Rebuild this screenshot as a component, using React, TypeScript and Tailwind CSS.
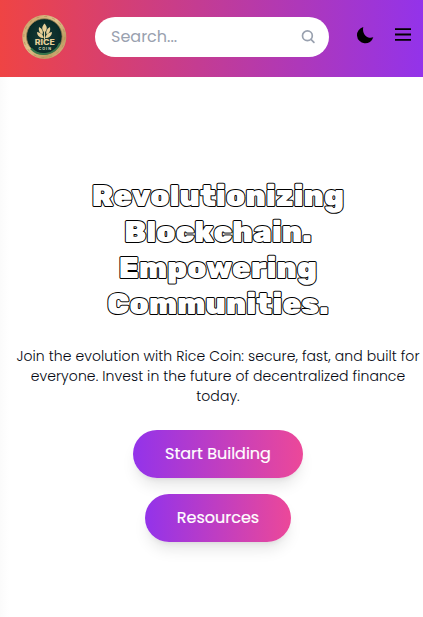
import React from "react";

const headline = ["Revolutionizing", "Blockchain.", "Empowering", "Communities."];

const intro = [
  "Join the evolution with Rice Coin: secure, fast, and built for",
  "everyone. Invest in the future of decentralized finance",
  "today.",
];

function Logo() {
  return (
    <svg viewBox="0 0 46 46" className="size-[46px] shrink-0" aria-label="Rice Coin">
      <defs>
        <linearGradient id="rim" x1="0" y1="0" x2="1" y2="1">
          <stop offset="0" stopColor="#c79c63" />
          <stop offset="0.45" stopColor="#dfc28b" />
          <stop offset="0.75" stopColor="#bd9b61" />
          <stop offset="1" stopColor="#e3c993" />
        </linearGradient>
        <radialGradient id="face">
          <stop offset="0" stopColor="#183b36" />
          <stop offset="1" stopColor="#082a27" />
        </radialGradient>
      </defs>
      <circle cx="22.300" cy="23" r="22" fill="url(#rim)" />
      <circle cx="22.300" cy="23" r="20.500" fill="none" stroke="#b18d57" strokeWidth="0.7" strokeDasharray="3 5" />
      <circle cx="22.300" cy="22.500" r="17.800" fill="url(#face)" stroke="#987f50" strokeWidth="0.800" />
      <path d="M9 34.500A17.500 17.500 0 0 0 38 29" fill="none" stroke="#36754b" strokeWidth="2" />
      <g fill="#e8cf98">
        <path d="M22.500 9.500c3 3.500 3 6 0 9-3-3-3-5.500 0-9Z" />
        <path d="M17 13c3.500 2 4.500 4.500 3.500 7.500-3-1.500-4.300-4-3.500-7.500Z" />
        <path d="M28 13c-3.500 2-4.500 4.500-3.500 7.500 3-1.500 4.300-4 3.500-7.500Z" />
        <path d="M15 18c4 .5 6 2.500 6.800 6-3.800 0-6.500-2-6.800-6Z" />
        <path d="M30 18c-4 .5-6 2.500-6.800 6 3.800 0 6.500-2 6.800-6Z" />
        <path d="M22 17.500h1v8h-1z" />
      </g>
      <text x="22.700" y="31.300" textAnchor="middle" textLength="20" lengthAdjust="spacingAndGlyphs" fill="#e8cf98" className="font-['Inter',sans-serif] text-[7.500px] font-extrabold">RICE</text>
      <text x="22.700" y="36" textAnchor="middle" textLength="12.500" lengthAdjust="spacing" fill="#ded9b8" className="font-['Inter',sans-serif] text-[3.700px] font-bold">COIN</text>
    </svg>
  );
}

function Header() {
  return (
    <header className="flex h-[77px] items-start bg-[linear-gradient(to_right,#ef4444,#9333ea)] pl-[22px] pr-2.5">
      <div className="pt-3.5"><Logo /></div>
      <label className="ml-[27px] mt-[17px] flex h-10 w-[234px] items-center rounded-full bg-white pl-4 pr-3.5">
        <input
          className="w-0 grow bg-transparent text-[16px] outline-none placeholder:text-gray-400"
          placeholder="Search..."
          aria-label="Search"
        />
        <svg viewBox="0 0 14 14" className="size-3.5 text-gray-400" fill="none" stroke="currentColor" strokeWidth="1.700" strokeLinecap="round">
          <circle cx="6.400" cy="5.800" r="4.900" />
          <path d="m10 9.400 2.900 2.900" />
        </svg>
      </label>
      <button aria-label="Dark mode" className="ml-7 mt-[27px]">
        <svg viewBox="0 0 17 17" className="size-[17px]">
          <path d="M6.300 0A8.300 8.300 0 1 0 16.300 10.300C10.300 12.300 4.700 7 6.300 0Z" />
        </svg>
      </button>
      <button aria-label="Menu" className="ml-[21px] mt-7">
        <svg viewBox="0 0 16 13" className="h-[13px] w-4">
          <path d="M0 1.200h16M0 6.500h16M0 11.800h16" stroke="black" strokeWidth="1.800" />
        </svg>
      </button>
    </header>
  );
}

export default function App() {
  return (
    <div className="h-[617px] w-[423px] overflow-hidden bg-white font-['Poppins','Inter',sans-serif]">
      <Header />
      <main className="flex h-[540px] flex-col items-center bg-[linear-gradient(to_right,#fbfbfb,#ffffff_9px)] pl-[13px] pt-[101px]">
        <h1 className="flex flex-col items-center font-['Rubik','Inter',sans-serif] text-[30px] leading-9 font-black tracking-[0.2px] text-white [paint-order:stroke_fill] [-webkit-text-stroke:2px_black]">
          {headline.map((line) => (
            <span key={line} className="whitespace-nowrap">{line}</span>
          ))}
        </h1>
        <p className="mt-6 flex flex-col items-center text-[14px] leading-5 font-light tracking-[0.08px] text-gray-950">
          {intro.map((line) => (
            <span key={line} className="whitespace-nowrap">{line}</span>
          ))}
        </p>
        <div className="mt-6 flex flex-col items-center gap-4 text-[16px] text-white">
          <button className="h-12 w-[170px] rounded-full bg-[linear-gradient(to_right,#9333ea,#ec4899)] shadow-lg [-webkit-text-stroke:0.200px_white]">Start Building</button>
          <button className="h-12 w-[146px] rounded-full bg-[linear-gradient(to_right,#9333ea,#ec4899)] shadow-lg [-webkit-text-stroke:0.200px_white]">Resources</button>
        </div>
      </main>
    </div>
  );
}
